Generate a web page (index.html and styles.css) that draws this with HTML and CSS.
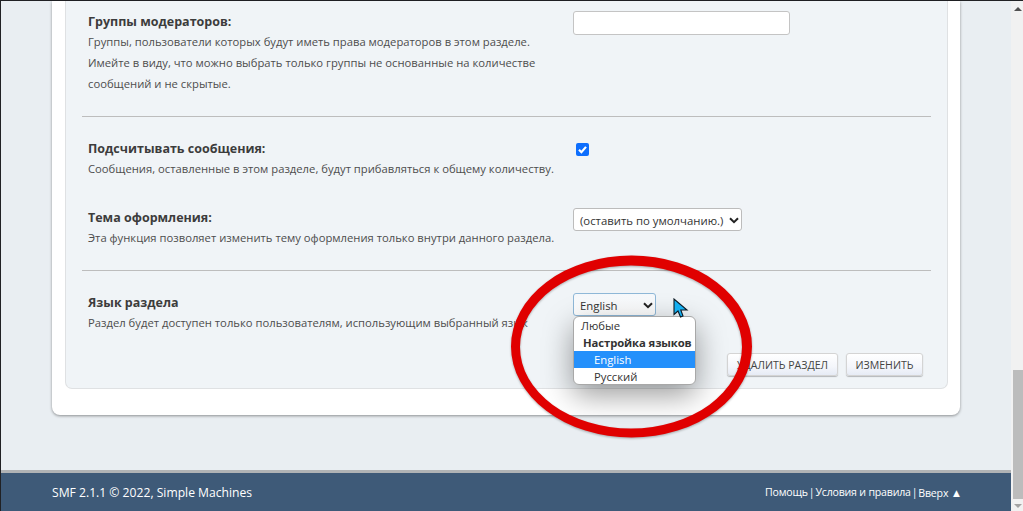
FILE: index.html
```html
<!DOCTYPE html>
<html lang="ru">
<head>
<meta charset="utf-8">
<title>Настройки раздела</title>
<link rel="stylesheet" href="styles.css">
</head>
<body>
<div class="window">
  <div class="page">
    <main class="content">
      <div class="card">
        <div class="panel">
          <section class="section s1">
            <div class="row">
              <div class="label">
                <strong class="title">Группы модераторов:</strong>
                <p class="desc">Группы, пользователи которых будут иметь права модераторов в этом разделе.<br>Имейте в виду, что можно выбрать только группы не основанные на количестве<br>сообщений и не скрытые.</p>
              </div>
              <div class="field"><div class="input"></div></div>
            </div>
          </section>
          <section class="section s2">
            <div class="row r-count">
              <div class="label">
                <strong class="title">Подсчитывать сообщения:</strong>
                <p class="desc">Сообщения, оставленные в этом разделе, будут прибавляться к общему количеству.</p>
              </div>
              <div class="field">
                <span class="check"><svg width="13" height="13" viewBox="0 0 13 13"><path d="M3 6.800 5.400 9.200 10 3.900" fill="none" stroke="#fff" stroke-width="2.200"/></svg></span>
              </div>
            </div>
            <div class="row r-theme">
              <div class="label">
                <strong class="title">Тема оформления:</strong>
                <p class="desc">Эта функция позволяет изменить тему оформления только внутри данного раздела.</p>
              </div>
              <div class="field">
                <div class="select theme"><span>(оставить по умолчанию.)</span><svg class="chev" width="10" height="7" viewBox="0 0 10 7"><path d="M1 1.200 5 5.200 9 1.200" fill="none" stroke="#222" stroke-width="2"/></svg></div>
              </div>
            </div>
          </section>
          <section class="s3">
            <div class="row r-lang">
              <div class="label">
                <strong class="title">Язык раздела</strong>
                <p class="desc">Раздел будет доступен только пользователям, использующим выбранный язык</p>
              </div>
              <div class="field">
                <div class="select lang"><span>English</span><svg class="chev" width="10" height="7" viewBox="0 0 10 7"><path d="M1 1.200 5 5.200 9 1.200" fill="none" stroke="#222" stroke-width="2"/></svg></div>
              </div>
            </div>
            <div class="actions">
              <span class="btn del">УДАЛИТЬ РАЗДЕЛ</span>
              <span class="btn edit">ИЗМЕНИТЬ</span>
            </div>
          </section>
        </div>
      </div>
    </main>
    <footer class="footer">
      <span class="copy">SMF 2.1.1 © 2022, Simple Machines</span>
      <span class="links"><span>Помощь</span><span>|</span><span>Условия и правила</span><span>|</span><span>Вверх <span class="top">▲</span></span></span>
    </footer>
  </div>
  <div class="scrollbar"><div class="arrow up"></div><div class="thumb"></div><div class="arrow down"></div></div>
</div>
<div class="dropdown">
  <div class="opt">Любые</div>
  <div class="opt group">Настройка языков</div>
  <div class="opt sub active">English</div>
  <div class="opt sub">Русский</div>
</div>
<svg class="ring" width="260" height="200" viewBox="0 0 260 200"><path fill="#e00000" fill-rule="evenodd" d="M10 100.500A120.500 91 0 1 0 251 100.500A120.500 91 0 1 0 10 100.500ZM19 101A111 81.500 0 1 1 241 101A111 81.500 0 1 1 19 101Z"/></svg>
<svg class="cursor" width="16" height="21" viewBox="0 0 16 21"><path d="M1 1V16.500L5 13 7.500 19 10 18 7.800 12H14Z" fill="#14b0f2" stroke="#0c1a24" stroke-width="1.100"/></svg>
</body>
</html>
```
FILE: styles.css
```css
* { box-sizing: border-box; }
html, body { margin: 0; height: 511px; overflow: hidden; }
body {
  font-family: "Open Sans", "Noto Sans", sans-serif;
  font-size: 11.25px;
  color: #4d4d4d;
  background: #e9eef2;
  position: relative;
}
.window {
  height: 511px;
  display: flex;
  border-top: 1px solid #202124;
  border-left: 1px solid #202124;
}
.page { width: 1010px; display: flex; flex-direction: column; }
.content { flex: 1; padding: 0 51px; }
.card {
  height: 414px;
  padding: 0 12px 0 13px;
  background: #fff;
  border-radius: 0 0 8px 8px;
  box-shadow: 0 1px 3px rgba(0, 0, 0, .4);
}
.panel {
  height: 388px;
  padding: 0 16px;
  background: #f0f4f7;
  border: 1px solid #dfe1e3;
  border-top: 0;
  border-radius: 0 0 7px 7px;
}
.section { border-bottom: 1px solid #bdbdbd; }
.s1 { height: 116px; padding-top: 10px; }
.s2 { height: 154px; padding-top: 21px; }
.s3 { padding-top: 21px; }
.row { display: grid; grid-template-columns: 491px 1fr; }
.label { padding-left: 6px; }
.title { display: block; margin-bottom: -2px; font-size: 12.5px; line-height: 22px; font-weight: 700; color: #3c3c3c; }
.desc { margin: 0; line-height: 21px; white-space: nowrap; }
.r-count { height: 69px; }
.input {
  width: 217px; height: 24px;
  background: #fff; border: 1px solid #c4c4c4; border-radius: 3px;
}
.check {
  display: block; width: 13px; height: 13px; margin: 5px 0 0 3px;
  background: #0d6efd; border-radius: 2px;
}
.check svg { display: block; }
.select {
  display: flex; align-items: center; justify-content: space-between;
  height: 23px; padding: 2px 2px 0 6px;
  font-size: 11.35px; color: #333; white-space: nowrap;
  background: #fff; border: 1px solid #bcbcbc; border-radius: 3px;
}
.theme { width: 169px; margin-top: 1px; }
.lang {
  width: 83px; margin-top: 1px;
  border-color: #8fb8d8;
  background: linear-gradient(#f5f8fb, #fff);
}
.actions { display: flex; justify-content: flex-end; gap: 8px; padding: 20px 8px 0 0; }
.btn {
  height: 23px; line-height: 22px; text-align: center;
  font-size: 10.6px; color: #444;
  background: linear-gradient(#fff, #f4f6fb 60%, #e6ebf5);
  border: 1px solid #d4d4d4; border-radius: 3px;
  box-shadow: 0 1px 1px rgba(0, 0, 0, .25);
}
.del { width: 111px; }
.edit { width: 77px; }
.footer {
  height: 41px;
  display: flex; align-items: center; justify-content: space-between;
  padding: 0 49px 0 51px;
  color: #fff; white-space: nowrap;
  background: #3e5a78;
  border-top: 3px solid #b0b3b5;
}
.copy { font-size: 12.15px; }
.links { display: flex; gap: 1px; font-size: 10.6px; letter-spacing: -.2px; }
.top { font-size: 11.5px; }
.scrollbar { flex: 1; position: relative; background: #f1f1f1; }
.thumb { position: absolute; top: 369px; left: 2px; right: 0; height: 129px; background: #bcbcbc; }
.arrow {
  position: absolute; left: 3px;
  border: 4px solid transparent; border-top: 0; border-bottom: 4px solid #505050;
}
.up { top: 6px; }
.down { bottom: 3px; transform: rotate(180deg); border-bottom-color: #a3a3a3; }
.dropdown {
  position: absolute; left: 573px; top: 316px; width: 123px; height: 69px;
  font-size: 11.3px; line-height: 17px; color: #333;
  background: #fff; border: 1px solid #a8a8a8; border-radius: 6px;
  box-shadow: 0 10px 30px rgba(0, 0, 0, .4);
  overflow: hidden;
}
.opt { padding-left: 7px; height: 17px; white-space: nowrap; }
.group { font-weight: 700; padding-left: 9px; letter-spacing: -.1px; }
.sub { padding-left: 20px; }
.active { background: #2490fb; color: #fff; }
.ring { position: absolute; left: 501px; top: 246px; filter: drop-shadow(0 1px 1px rgba(0, 0, 0, .3)); }
.cursor { position: absolute; left: 673px; top: 298px; }
```
